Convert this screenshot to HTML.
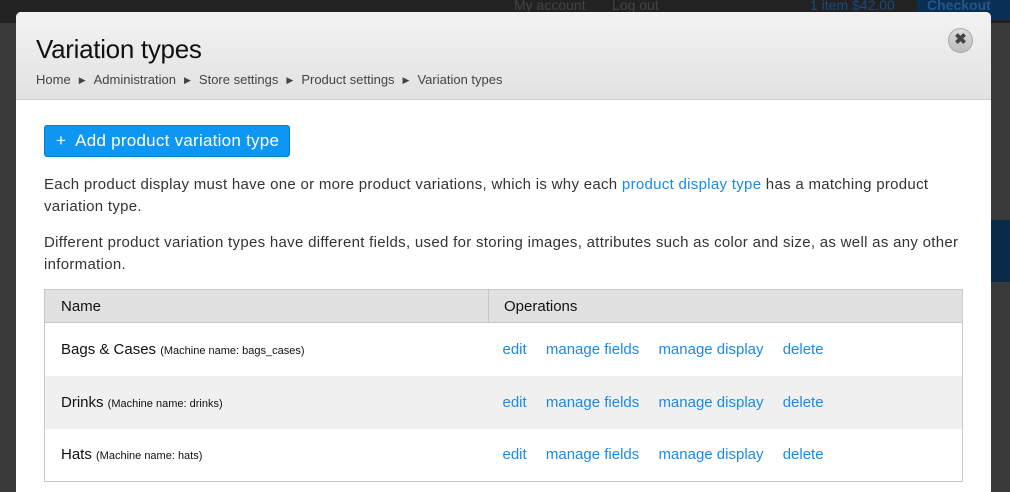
<!DOCTYPE html>
<html><head><style>
*{margin:0;padding:0;box-sizing:border-box}
body{width:1010px;height:483px;overflow:hidden;background:#3a3a3a;font-family:"Liberation Sans",sans-serif;position:relative}
.top{position:absolute;left:0;top:0;width:1010px;height:23px;background:#222;color:#444;font-size:14px}
.top span{position:absolute;top:-3px}
.modal{position:absolute;left:16px;top:12px;width:975px;height:480px;background:#fff;border-radius:5px 5px 0 0;overflow:hidden}
.hd{height:88px;background:linear-gradient(#f2f2f2,#e2e2e2);border-bottom:1px solid #d0d0d0}
h1{position:absolute;left:20px;top:22px;font-size:26px;font-weight:normal;color:#111;letter-spacing:-0.3px}
.bc{position:absolute;left:20px;top:60px;font-size:13px;color:#444}
.bc i{font-style:normal;font-size:9px;margin:0 8px;position:relative;top:-1px}
.x{position:absolute;left:932px;top:16px;width:25px;height:25px;border-radius:50%;background:linear-gradient(#ddd,#bbb);border:1px solid #aaa;color:#444;font-size:15px;font-weight:bold;text-align:center;line-height:22px}
.btn{position:absolute;left:28px;top:113px;width:246px;height:32px;background:#0d96f2;border:1px solid #0a7fd0;border-radius:3px;color:#fff;font-size:17px;line-height:30px;padding-left:11px;letter-spacing:0.25px}
p{position:absolute;left:28px;width:945px;font-size:15px;line-height:22px;color:#333;letter-spacing:0.3px}
a{color:#1a8ae8;text-decoration:none}
table{position:absolute;left:28px;top:277px;width:919px;border-collapse:collapse;border:1px solid #c8c8c8;font-size:15px;color:#111}
th{background:#e1e1e1;height:33px;text-align:left;font-weight:normal;padding-left:16px;border-bottom:1px solid #c8c8c8}
th+th{border-left:1px solid #c8c8c8;padding-left:15px}
td{height:53px;padding-left:16px}
td small{font-size:11px}
tr.g td{background:#f0f0f0}
td.o{padding-left:14px}
td.o a{margin-right:15px}
</style></head><body>
<div class="top"><span style="left:514px">My account</span><span style="left:612px">Log out</span><span style="left:810px;color:#1a4a80">1 item $42.00</span><span style="left:917px;width:93px;height:23px;background:#0a2f55;color:#23578a;font-weight:bold;padding-left:10px">Checkout</span></div>
<div style="position:absolute;left:991px;top:220px;width:19px;height:62px;background:#0a2a4a"></div>
<div class="modal">
<div class="hd"></div>
<h1>Variation types</h1>
<div class="bc">Home<i>▶</i>Administration<i>▶</i>Store settings<i>▶</i>Product settings<i>▶</i>Variation types</div>
<div class="x">✖</div>
<div class="btn">+&nbsp; Add product variation type</div>
<p style="top:162px">Each product display must have one or more product variations, which is why each <a>product display type</a> has a matching product<br>variation type.</p>
<p style="top:220px">Different product variation types have different fields, used for storing images, attributes such as color and size, as well as any other<br>information.</p>
<table>
<tr><th style="width:444px">Name</th><th>Operations</th></tr>
<tr><td>Bags &amp; Cases <small>(Machine name: bags_cases)</small></td><td class="o"><a>edit</a> <a>manage fields</a> <a>manage display</a> <a>delete</a></td></tr>
<tr class="g"><td>Drinks <small>(Machine name: drinks)</small></td><td class="o"><a>edit</a> <a>manage fields</a> <a>manage display</a> <a>delete</a></td></tr>
<tr><td>Hats <small>(Machine name: hats)</small></td><td class="o"><a>edit</a> <a>manage fields</a> <a>manage display</a> <a>delete</a></td></tr>
</table>
</div>
</body></html>
